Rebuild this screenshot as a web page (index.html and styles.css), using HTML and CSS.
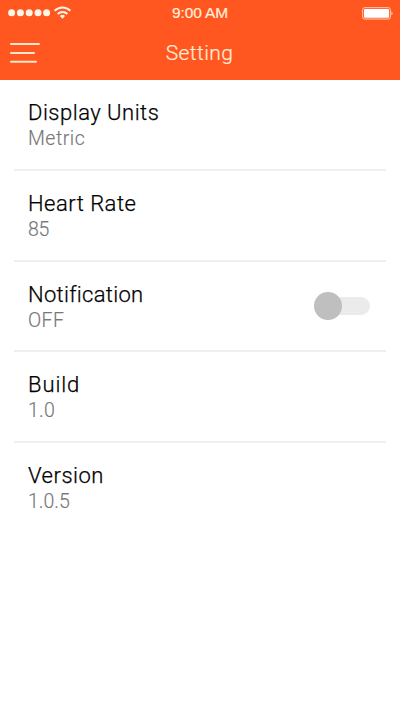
FILE: index.html
```html
<!DOCTYPE html>
<html lang="en">
<head>
<meta charset="utf-8">
<title>Setting</title>
<link rel="stylesheet" href="styles.css">
</head>
<body>
<header class="header">
  <div class="status">
    <svg class="signal" width="64" height="14" viewBox="0 0 64 14" fill="#fff4e8">
      <circle cx="3.6" cy="6.7" r="3.5"/><circle cx="12.4" cy="6.7" r="3.5"/><circle cx="21.2" cy="6.7" r="3.5"/><circle cx="30" cy="6.7" r="3.5"/><circle cx="38.6" cy="6.7" r="3.5"/>
      <g fill="none" stroke="#fff4e8" stroke-width="2"><path d="M46.7 4.8a11 11 0 0 1 15.6 0"/><path d="M49.7 8a6.8 6.8 0 0 1 9.6 0"/></g>
      <path d="M51.9 10.1a3.7 3.7 0 0 1 5.2 0l-2.6 2.7z"/>
    </svg>
    <span class="time">9:00 AM</span>
    <svg class="battery" width="32" height="13" viewBox="0 0 32 13">
      <rect x=".7" y=".7" width="27.6" height="11.3" rx="1.8" fill="none" stroke="#ffd0b8"/>
      <rect x="2" y="2" width="25" height="8.7" rx=".8" fill="#fff"/>
      <path d="M29.5 4.2q2 2.1 0 4.2z" fill="#ffe4d6"/>
    </svg>
  </div>
  <div class="navbar">
    <svg class="menu" width="30" height="22" viewBox="0 0 30 22" fill="none" stroke="#ffe6cc" stroke-width="2" stroke-linecap="round"><path d="M1 2h28M1 11h23M1 19.8h25"/></svg>
    <h1 class="title">Setting</h1>
  </div>
</header>
<main class="list">
  <section class="row"><div><h2 class="label units">Display Units</h2><p class="value metric">Metric</p></div></section>
  <section class="row"><div><h2 class="label heart">Heart Rate</h2><p class="value rate">85</p></div></section>
  <section class="row"><div><h2 class="label notification">Notification</h2><p class="value off">OFF</p></div><div class="switch"><span class="knob"></span></div></section>
  <section class="row"><div><h2 class="label build">Build</h2><p class="value">1.0</p></div></section>
  <section class="row"><div><h2 class="label version">Version</h2><p class="value version-value">1.0.5</p></div></section>
</main>
</body>
</html>
```
FILE: styles.css
```css
* { box-sizing: border-box; }
body { margin: 0; min-height: 711px; background: #fff; font-family: Roboto, sans-serif; }
h1, h2, p { margin: 0; font-weight: 400; }
svg { display: block; }
.header { height: 80px; background: #ff571f; }
.status, .navbar { display: grid; grid-template-columns: 1fr auto 1fr; align-items: center; }
.status { height: 26px; padding: 0 8px; }
.battery { margin-right: -2px; }
.time { font: 500 15.5px/26px "Liberation Sans", Roboto, sans-serif; letter-spacing: -.15px; color: #fff0dd; -webkit-text-stroke: .2px #fff0dd; }
.battery { justify-self: end; }
.navbar { height: 54px; padding: 0 11px 0 10px; }
.title { grid-column: 2; font-size: 21px; line-height: 54px; font-weight: 300; letter-spacing: .4px; color: #ffeeda; -webkit-text-stroke: .2px #ffeeda; }
.list { padding: 0 14px; }
.row { display: flex; justify-content: space-between; height: 90.75px; padding: 20px 16px 0 14px; border-bottom: 2px solid #efefef; white-space: nowrap; }
.row:last-child { border-bottom: 0; }
.label { font-size: 22px; line-height: 26px; font-weight: 300; color: #000; -webkit-text-stroke: .25px #000; letter-spacing: .5px; }
.notification { letter-spacing: .3px; }
.build { letter-spacing: .9px; }
.value { font-size: 19.5px; line-height: 26px; font-weight: 300; color: #777; -webkit-text-stroke: .15px #777; letter-spacing: .2px; }
.metric { letter-spacing: .5px; }
.rate { letter-spacing: -.3px; }
.off { letter-spacing: .4px; }
.version-value { letter-spacing: 0; }
.switch { display: flex; align-items: center; width: 49px; height: 18px; margin: 15px 0 0; border-radius: 9px; background: #ebebeb; }
.knob { flex: none; width: 28px; height: 28px; margin-left: -7px; border-radius: 50%; background: #bfbfbf; }
```
